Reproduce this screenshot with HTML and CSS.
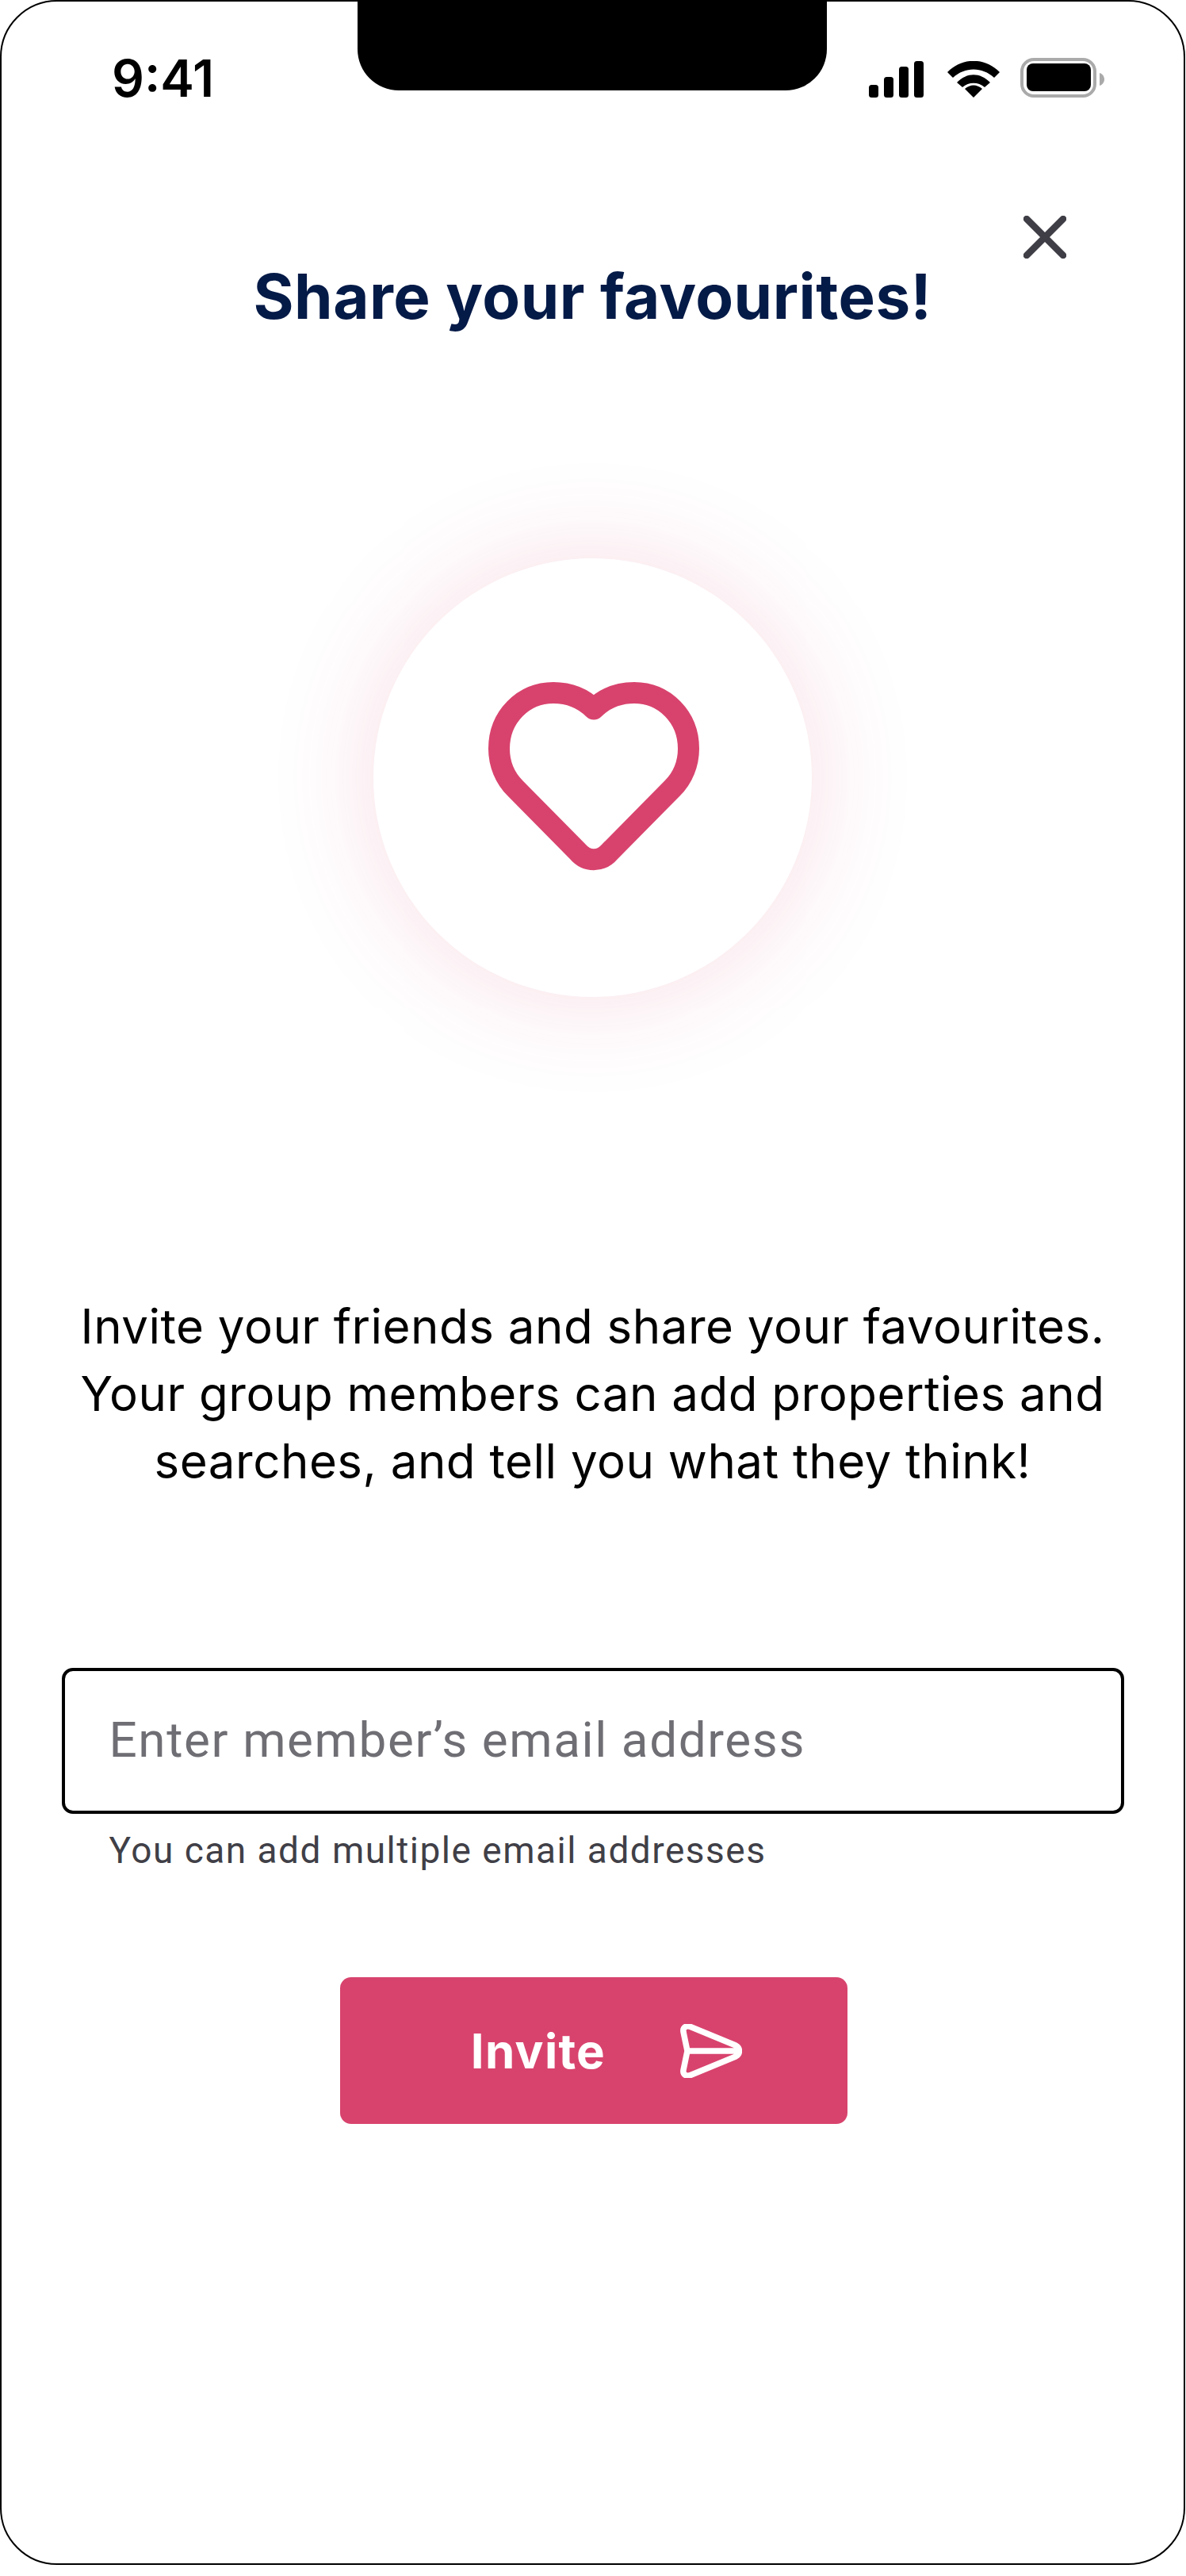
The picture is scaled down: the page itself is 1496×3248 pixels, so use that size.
FILE: index.html
```html
<!DOCTYPE html>
<html lang="en">

<head>
  <meta charset="UTF-8">
  <meta name="viewport" content="width=device-width, initial-scale=1.0">
  <title>Share your favourites</title>
  <link rel="stylesheet" href="styles.css">
</head>

<body>
  <div class="phone">
    <div class="notch"></div>

    <div class="status">
      <span class="time">9:41</span>
      <div class="status-icons">
        <svg class="signal" width="70" height="46" viewBox="0 0 70 46">
          <rect x="0" y="30" width="12" height="16" rx="3.5" />
          <rect x="19" y="20" width="12" height="26" rx="3.5" />
          <rect x="38" y="7" width="12" height="39" rx="3.5" />
          <rect x="57" y="0" width="12" height="46" rx="3.5" />
        </svg>
        <svg class="wifi" width="66" height="46" viewBox="0 0 66 46">
          <path d="M33 46 L22 35 C29 29 37 29 44 35 Z" />
          <path d="M0 14 L7 21 C22 7 44 7 59 21 L66 14 C47 -5 19 -5 0 14 Z" />
          <path d="M12 27 L19 33 C27 26 39 26 47 33 L54 27 C41 14 25 14 12 27 Z" />
        </svg>
        <svg class="battery" width="106" height="50" viewBox="0 0 106 50">
          <rect x="2" y="2" width="92" height="46" rx="15" fill="none" stroke="#aaa" stroke-width="4" />
          <rect x="8" y="7" width="81" height="35" rx="8" />
          <path d="M100 19 C104 20 106 24 106 27 C106 30 104 34 100 35 Z" fill="#aaa" />
        </svg>
      </div>
    </div>

    <div class="close-row">
      <svg width="54" height="54" viewBox="0 0 54 54">
        <path d="M4 4 L50 50 M50 4 L4 50" />
      </svg>
    </div>

    <h1 class="title">Share your favourites!</h1>

    <div class="badge">
      <svg width="266" height="238" viewBox="0 0 266 238">
        <path d="M133 34 C119 20 101 13.5 82 13.5 C44 13.5 13.5 44 13.5 84 C13.5 103 21 121 34 134 L113 214 C124 227 142 227 153 214 L232 134 C245 121 252.5 103 252.5 84 C252.5 44 222 13.5 184 13.5 C165 13.5 147 20 133 34 Z" />
      </svg>
    </div>

    <p class="intro">Invite your friends and share your favourites.<br>Your group members can add properties and<br>searches, and tell you what they think!</p>

    <div class="field">
      <input class="email" type="text" placeholder="Enter member’s email address">
      <small class="hint">You can add multiple email addresses</small>
    </div>

    <a class="invite" href="javascript:;">
      <span>Invite</span>
      <svg width="78" height="68" viewBox="0 0 78 68">
        <path d="M9 34 L4 10 C3 4 8 1.5 13 3.5 L70 27 C76 30 76 38 70 41 L13 64.5 C8 66.5 3 64 4 58 Z M9 34 H72" />
      </svg>
    </a>
  </div>
</body>

</html>
```

FILE: styles.css
```css
* {
  padding: 0;
  margin: 0;
  box-sizing: border-box;
}

body {
  background: #fff;
  font-family: Inter, "Liberation Sans", sans-serif;
}

.phone {
  position: relative;
  width: 1495px;
  height: 3234px;
  border: solid 2px #000;
  border-radius: 72px;
  background: #fff;
  display: flex;
  flex-direction: column;
  align-items: center;
}

.notch {
  position: absolute;
  top: -2px;
  left: 449px;
  width: 592px;
  height: 114px;
  background: #000;
  border-radius: 0 0 52px 52px;
}

.status {
  width: 100%;
  height: 122px;
  padding: 72px 100px 0 139px;
  display: flex;
  justify-content: space-between;
  align-items: flex-start;
}

.time {
  font-size: 64px;
  line-height: 50px;
  font-weight: 600;
  color: #000;
}

.status-icons {
  display: flex;
  align-items: flex-start;
  gap: 26px;
  margin-top: 3px;
}

.status-icons svg {
  display: block;
  fill: #000;
}

.signal {
  margin-right: 3px;
}

.battery {
  margin-top: -4px;
}

.close-row {
  width: 100%;
  height: 54px;
  margin-top: 148px;
  padding-right: 148px;
  display: flex;
  justify-content: flex-end;
}

.close-row path {
  fill: none;
  stroke: #3f3d45;
  stroke-width: 8.5;
  stroke-linecap: round;
}

.title {
  margin-top: 2px;
  font-size: 78px;
  line-height: 92px;
  letter-spacing: 0.5px;
  font-weight: 700;
  color: #041a47;
  text-align: center;
}

.badge {
  width: 553px;
  height: 553px;
  margin-top: 284px;
  border-radius: 50%;
  background: #fff;
  box-shadow: 0 0 130px rgba(216, 67, 110, 0.18);
  display: flex;
  justify-content: center;
  align-items: center;
}

.badge svg {
  margin: 0 0 4px 3px;
}

.badge path {
  fill: none;
  stroke: #d8436d;
  stroke-width: 27;
  stroke-linejoin: round;
}

.intro {
  margin-top: 373px;
  font-size: 60px;
  line-height: 85px;
  letter-spacing: 0.5px;
  color: #000;
  text-align: center;
}

.field {
  width: 1340px;
  margin-top: 218px;
  display: flex;
  flex-direction: column;
}

.email {
  width: 100%;
  height: 184px;
  padding: 0 56px 4px;
  border: solid 4px #000;
  border-radius: 14px;
  outline: none;
  font-family: Roboto, sans-serif;
  font-size: 62px;
  letter-spacing: 1.6px;
  color: #333;
  background: #fff;
}

.email::placeholder {
  color: #6f6e74;
  opacity: 1;
}

.hint {
  margin-top: 18px;
  padding-left: 60px;
  font-family: Roboto, sans-serif;
  font-size: 46px;
  line-height: 56px;
  letter-spacing: 1.5px;
  color: #403f47;
}

.invite {
  width: 640px;
  height: 185px;
  margin: 132px 0 0 3px;
  padding-left: 32px;
  border-radius: 14px;
  background: #d8436d;
  color: #fff;
  text-decoration: none;
  display: flex;
  justify-content: center;
  align-items: center;
  gap: 94px;
  font-size: 60px;
  letter-spacing: 1.3px;
  font-weight: 700;
}

.invite path {
  fill: none;
  stroke: #fff;
  stroke-width: 7.5;
  stroke-linejoin: round;
}
```
